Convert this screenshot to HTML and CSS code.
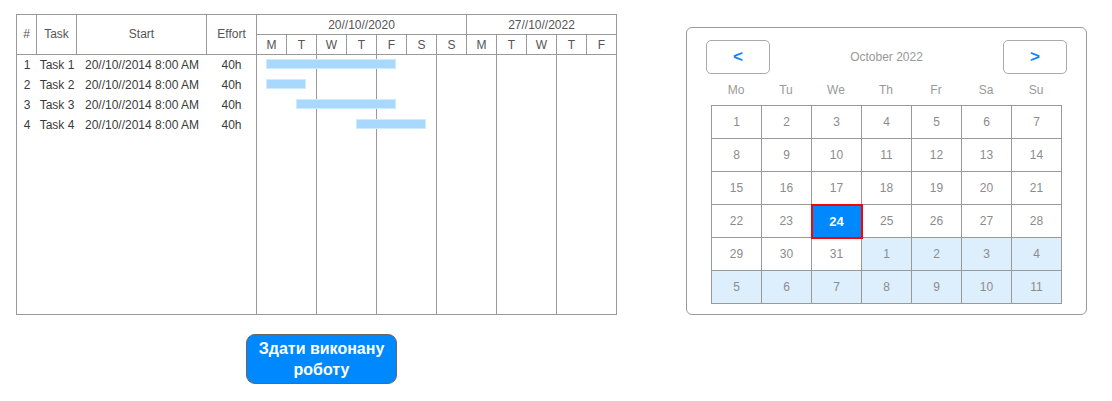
FILE: index.html
```html
<!DOCTYPE html>
<html>
<head>
<meta charset="utf-8">
<link rel="stylesheet" href="styles.css">
</head>
<body>
<div class="page">
  <div class="left">
    <div class="gantt">
      <div class="hcell span2 c1">#</div>
      <div class="hcell span2 c2">Task</div>
      <div class="hcell span2 c3">Start</div>
      <div class="hcell span2 c4">Effort</div>
      <div class="hcell week1">20//10//2020</div>
      <div class="hcell week2">27//10//2022</div>
      <div class="hcell day">M</div>
      <div class="hcell day">T</div>
      <div class="hcell day">W</div>
      <div class="hcell day">T</div>
      <div class="hcell day">F</div>
      <div class="hcell day">S</div>
      <div class="hcell day">S</div>
      <div class="hcell day">M</div>
      <div class="hcell day">T</div>
      <div class="hcell day">W</div>
      <div class="hcell day">T</div>
      <div class="hcell day">F</div>

      <div class="tasks">
        <div class="trow"><span>1</span><span>Task 1</span><span>20//10//2014 8:00 AM</span><span>40h</span></div>
        <div class="trow"><span>2</span><span>Task 2</span><span>20//10//2014 8:00 AM</span><span>40h</span></div>
        <div class="trow"><span>3</span><span>Task 3</span><span>20//10//2014 8:00 AM</span><span>40h</span></div>
        <div class="trow"><span>4</span><span>Task 4</span><span>20//10//2014 8:00 AM</span><span>40h</span></div>
      </div>
      <div class="lane l1"></div>
      <div class="lane l2"></div>
      <div class="lane l3"></div>
      <div class="lane l4"></div>
      <div class="lane l5"></div>
      <div class="lane l6"></div>
      <div class="bars">
        <div class="brow"><div class="bar" style="margin-left:9px;width:130px"></div></div>
        <div class="brow"><div class="bar" style="margin-left:9px;width:40px"></div></div>
        <div class="brow"><div class="bar" style="margin-left:39px;width:100px"></div></div>
        <div class="brow"><div class="bar" style="margin-left:99px;width:70px"></div></div>
      </div>
    </div>
    <button class="submit">Здати виконану роботу</button>
  </div>

  <div class="calendar">
    <div class="cal-head">
      <button class="nav">&lt;</button>
      <div class="month">October 2022</div>
      <button class="nav">&gt;</button>
    </div>
    <div class="weekdays">
      <span>Mo</span><span>Tu</span><span>We</span><span>Th</span><span>Fr</span><span>Sa</span><span>Su</span>
    </div>
    <table class="days">
      <tr><td>1</td><td>2</td><td>3</td><td>4</td><td>5</td><td>6</td><td>7</td></tr>
      <tr><td>8</td><td>9</td><td>10</td><td>11</td><td>12</td><td>13</td><td>14</td></tr>
      <tr><td>15</td><td>16</td><td>17</td><td>18</td><td>19</td><td>20</td><td>21</td></tr>
      <tr><td>22</td><td>23</td><td class="today">24</td><td>25</td><td>26</td><td>27</td><td>28</td></tr>
      <tr><td>29</td><td>30</td><td>31</td><td class="next">1</td><td class="next">2</td><td class="next">3</td><td class="next">4</td></tr>
      <tr><td class="next">5</td><td class="next">6</td><td class="next">7</td><td class="next">8</td><td class="next">9</td><td class="next">10</td><td class="next">11</td></tr>
    </table>
  </div>
</div>
</body>
</html>
```

FILE: styles.css
```css
* { box-sizing: border-box; }
body {
  margin: 0;
  background: #fff;
  font-family: "Liberation Sans", Arial, sans-serif;
  font-size: 12px;
}
.page {
  display: flex;
  align-items: flex-start;
  padding: 14px 0 0 16px;
}
.left {
  display: flex;
  flex-direction: column;
  align-items: flex-start;
}
.gantt {
  display: grid;
  grid-template-columns: 20px 40px 130px 50px repeat(12, 30px);
  grid-template-rows: 20px 20px 260px;
  border-left: 1px solid #999;
  border-top: 1px solid #999;
  width: 601px;
  color: #444;
}
.hcell {
  border-right: 1px solid #999;
  border-bottom: 1px solid #999;
  display: flex;
  align-items: center;
  justify-content: center;
  color: #555;
}
.span2 { grid-row: 1 / 3; padding-bottom: 1px; }
.week1 { grid-column: 5 / 12; }
.week2 { grid-column: 12 / 17; }
.day { grid-row: 2; }

.tasks {
  grid-column: 1 / 5;
  grid-row: 3;
  border-right: 1px solid #999;
  border-bottom: 1px solid #999;
  display: flex;
  flex-direction: column;
}
.trow {
  display: grid;
  grid-template-columns: 20px 40px 130px 49px;
  height: 20px;
  line-height: 20px;
  text-align: center;
  white-space: nowrap;
  color: #3a3a3a;
}
.lane {
  grid-row: 3;
  border-right: 1px solid #999;
  border-bottom: 1px solid #999;
}
.l1 { grid-column: 5 / 7; }
.l2 { grid-column: 7 / 9; }
.l3 { grid-column: 9 / 11; }
.l4 { grid-column: 11 / 13; }
.l5 { grid-column: 13 / 15; }
.l6 { grid-column: 15 / 17; }
.bars {
  grid-column: 5 / 17;
  grid-row: 3;
  display: flex;
  flex-direction: column;
  padding-top: 4px;
}
.brow {
  height: 20px;
}
.bar {
  height: 10px;
  background: #a8d9fd;
  border: 1px solid #cfebff;
}

.submit {
  margin: 19px 0 0 230px;
  width: 151px;
  height: 50px;
  background: #0088ff;
  border: 1px solid #666;
  border-radius: 9px;
  color: #fff;
  font-family: "Liberation Sans", Arial, sans-serif;
  font-weight: bold;
  font-size: 16px;
  line-height: 21px;
  padding: 0 8px;
}

.calendar {
  margin: 13px 0 0 69px;
  width: 401px;
  height: 288px;
  border: 1px solid #999;
  border-radius: 6px;
  padding: 12px 19px 0 19px;
}
.cal-head {
  display: flex;
  align-items: center;
  justify-content: space-between;
  height: 34px;
}
.nav {
  width: 64px;
  height: 34px;
  background: #fff;
  border: 1px solid #aaa;
  border-radius: 5px;
  color: #0a84ff;
  font-family: "Liberation Sans", Arial, sans-serif;
  font-weight: bold;
  font-size: 17px;
  padding: 0;
}
.month {
  color: #999;
  font-size: 12px;
}
.weekdays {
  display: grid;
  grid-template-columns: repeat(7, 50px);
  margin: 0 0 0 5px;
  height: 31px;
  align-items: center;
  color: #999;
  font-size: 12px;
  text-align: center;
  padding-top: 0;
}
.days {
  border-collapse: collapse;
  margin-left: 5px;
  table-layout: fixed;
}
.days td {
  width: 50px;
  height: 33px;
  border: 1px solid #999;
  text-align: center;
  color: #8c8c8c;
  font-size: 12px;
  padding: 0;
}
.days td.next {
  background: #ddeefd;
}
.days td.today {
  background: #0088ff;
  border: 2px solid #ff0000;
  color: #fff;
  font-weight: bold;
  font-size: 13px;
}
```
